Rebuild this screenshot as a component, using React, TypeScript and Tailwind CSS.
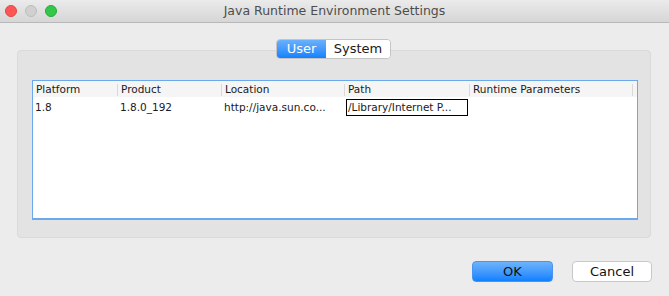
import React from "react";

const cols = [
  { name: "Platform", w: 85, v: "1.8" },
  { name: "Product", w: 104, v: "1.8.0_192" },
  { name: "Location", w: 123, v: "http://java.sun.co..." },
  { name: "Path", w: 125, v: "/Library/Internet P..." },
  { name: "Runtime Parameters", w: 163, v: "" },
];

export default function App() {
  return (
    <div
      className="w-[669px] h-[296px] bg-[#ececec] flex flex-col text-[#1a1a1a]"
      style={{ fontFamily: '"DejaVu Sans", "Liberation Sans", sans-serif' }}
    >
      {/* title bar */}
      <div className="h-[23px] flex items-center bg-gradient-to-b from-[#ebebeb] to-[#d6d6d6] border-b border-[#b9b9b9] relative shrink-0">
        <div className="flex gap-[8px] pl-[5px] items-center">
          <div className="w-[12px] h-[12px] rounded-full bg-[#fc5753] border border-[#df4744]" />
          <div className="w-[12px] h-[12px] rounded-full bg-[#d0d0d0] border border-[#bdbdbd]" />
          <div className="w-[12px] h-[12px] rounded-full bg-[#34c84a] border border-[#27aa35]" />
        </div>
        <div className="flex-1 text-center text-[12.5px] text-[#4d4d4d] pr-[57px] leading-none">
          Java Runtime Environment Settings
        </div>
      </div>

      <div className="flex flex-col pt-[16px] pl-[17px]">
        <div className="relative z-10 self-start ml-[259px] flex h-[20px] text-[13px] rounded-[4px] border border-[#c4c4c4] overflow-hidden bg-white">
          <div className="w-[49px] flex items-center justify-center text-white bg-gradient-to-b from-[#69b1fa] to-[#0d81ff]">
            User
          </div>
          <div className="w-[64px] flex items-center justify-center text-[#1a1a1a] bg-white">
            System
          </div>
        </div>
        <div className="-mt-[9px] w-[634px] h-[188px] bg-[#e3e3e3] border border-[#dadada] rounded-[4px] pl-[14px] pr-[12px] pt-[29px] pb-[17px]">
          <div className="h-full bg-white border border-[#6aa9ee] border-b-2 flex flex-col text-[10.5px]">
            <div className="h-[16px] bg-[#f5f5f5] flex items-center pt-[1px]">
              {cols.map((c) => (
                <div
                  key={c.name}
                  style={{ width: c.w }}
                  className="h-[12px] flex items-center border-r border-[#d9d9d9] pl-[3px] leading-none text-[#1a1a1a]"
                >
                  {c.name}
                </div>
              ))}
            </div>
            <div className="h-[21px] flex items-center">
              {cols.map((c, i) =>
                i === 3 ? (
                  <div
                    key={c.name}
                    style={{ width: c.w - 3 }}
                    className="h-[17px] ml-[1px] mr-[2px] flex items-center border border-black pl-[1px] leading-none"
                  >
                    {c.v}
                  </div>
                ) : (
                  <div
                    key={c.name}
                    style={{ width: c.w }}
                    className="pl-[2px] leading-none"
                  >
                    {c.v}
                  </div>
                )
              )}
            </div>
          </div>
        </div>
      </div>

      <div className="flex justify-end gap-[19px] pr-[17px] pt-[23px]">
        <button className="w-[81px] h-[21px] rounded-[4px] text-[13px] text-[#111] bg-gradient-to-b from-[#6cb3fa] to-[#0a80ff] border border-[#4a94f0] flex items-center justify-center">
          OK
        </button>
        <button className="w-[80px] h-[21px] rounded-[4px] text-[13px] text-[#111] bg-white border border-[#c8c8c8] flex items-center justify-center">
          Cancel
        </button>
      </div>
    </div>
  );
}
